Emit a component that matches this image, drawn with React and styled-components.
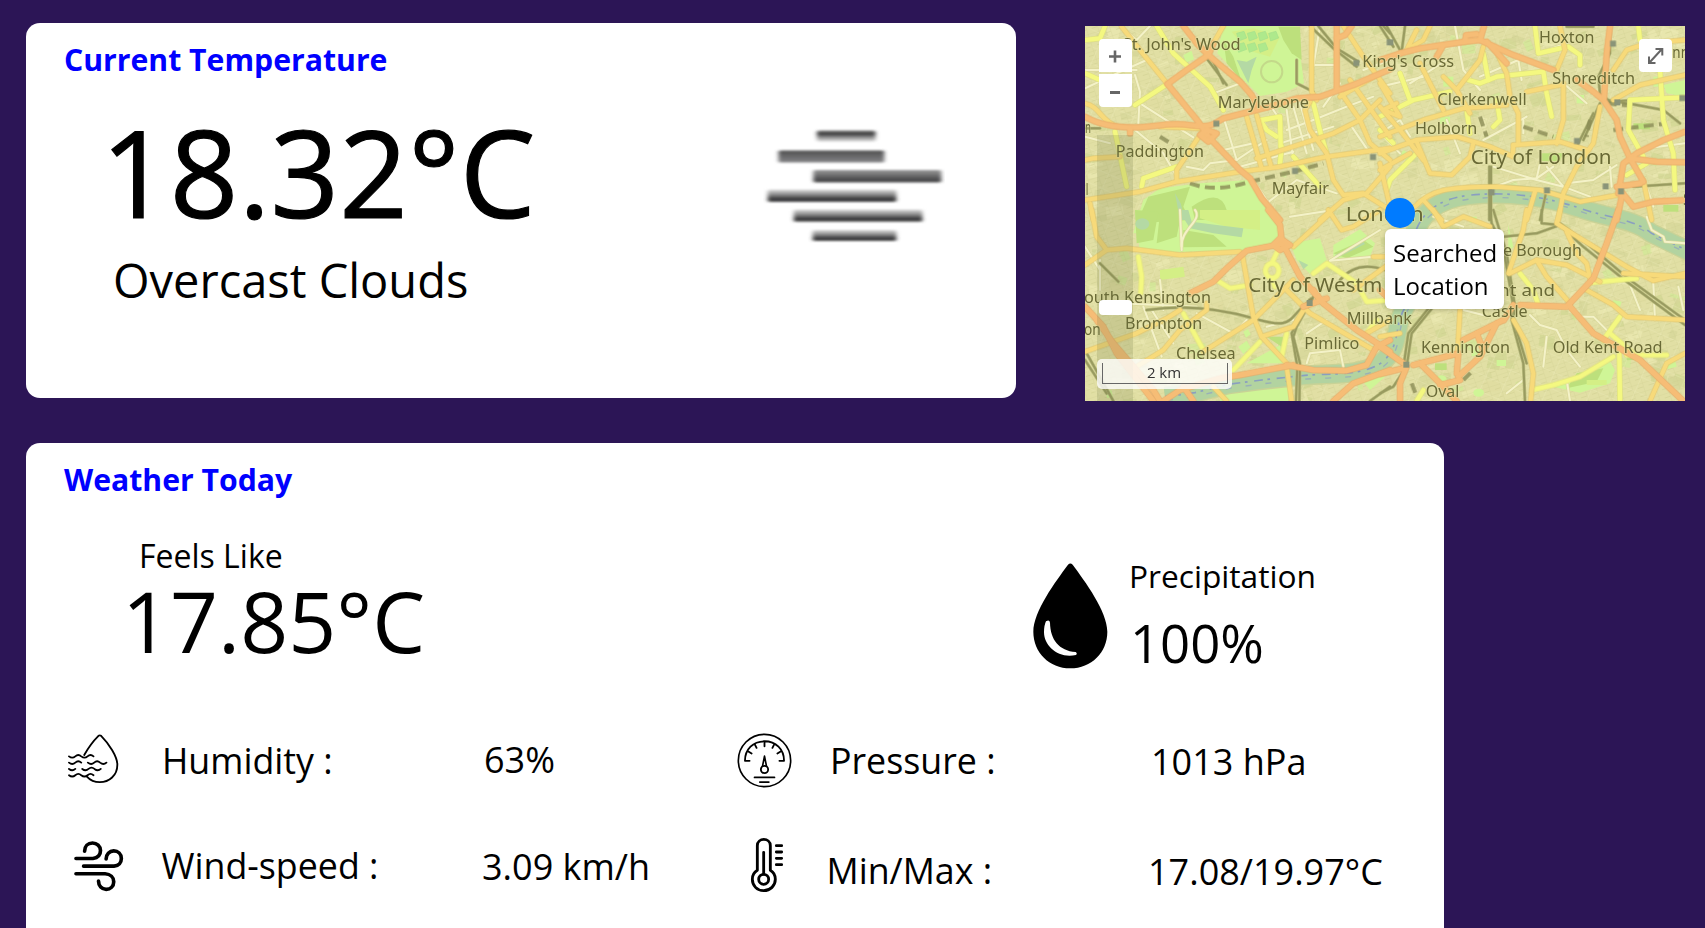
import React from "react";
import styled, { createGlobalStyle } from "styled-components";

const GlobalStyle = createGlobalStyle`
  *, *::before, *::after { box-sizing: border-box; }
  html, body { margin: 0; background: #2c1556; }
  body {
    height: 928px;
    overflow: hidden;
    font-family: "Open Sans", "Noto Sans", sans-serif;
    color: #000;
  }
`;

const Page = styled.main`
  display: flex;
  flex-direction: column;
  gap: 42px;
  height: 928px;
  padding: 23px 20px 0 26px;
  overflow: hidden;
`;

const TopRow = styled.div`
  display: flex;
  align-items: flex-start;
  gap: 69px;
  height: 378px;
`;

const Card = styled.section`
  flex: none;
  width: ${(p) => p.$width}px;
  height: ${(p) => p.$height}px;
  padding: 21px 0 0 38px;
  background: #fff;
  border-radius: 14px;
`;

const CardTitle = styled.h2`
  margin: 0;
  font-size: 30.2px;
  line-height: 31px;
  font-weight: 700;
  color: #0000ff;
`;

const CurrentBody = styled.div`
  display: flex;
  justify-content: space-between;
  align-items: flex-start;
  padding: 37px 71px 0 37px;
`;

const CurrentTemp = styled.div`
  font-size: 120px;
  line-height: 120px;
  letter-spacing: 0.25px;
  -webkit-text-stroke: 1.2px #000;
`;

const Condition = styled.div`
  margin: 24px 0 0 12px;
  font-size: 47px;
  line-height: 48px;
`;

const WeatherIcon = styled.svg`
  width: 182px;
  height: 116px;
  margin-top: 15px;
`;

const Hero = styled.div`
  display: flex;
  justify-content: space-between;
  padding: 44px 128px 0 58px;
  height: 226px;
`;

const FeelsLabel = styled.div`
  padding-left: 17px;
  margin-top: 1px;
  font-size: 32px;
  line-height: 32px;
`;

const FeelsValue = styled.div`
  margin-top: 7px;
  font-size: 84px;
  line-height: 84px;
`;

const Precipitation = styled.div`
  display: flex;
  align-items: flex-start;
  gap: 20px;
  padding-top: 21px;
`;

const DropIcon = styled.svg`
  width: 76px;
  height: 106px;
  margin-top: 3px;
`;

const PrecipLabel = styled.div`
  font-size: 31.7px;
  line-height: 32px;
`;

const PrecipValue = styled.div`
  margin: 24px 0 0 1px;
  font-size: 52.7px;
  line-height: 53px;
`;

const Metrics = styled.div`
  display: grid;
  grid-template-columns: 667px 1fr;
  grid-template-rows: 105px 100px;
  padding-top: 21px;
`;

const Metric = styled.div`
  display: grid;
  grid-template-columns: 98px 322px 1fr;
  align-items: start;
  font-size: 36px;
  line-height: 36px;
`;

const MetricText = styled.span`
  margin: ${(p) => p.$drop || 0}px 0 0 ${(p) => p.$shift || 0}px;
  font-size: ${(p) => (p.$label ? 35.75 : 36)}px;
  white-space: nowrap;
`;

const MetricIcon = styled.svg`
  width: ${(p) => p.$w}px;
  height: ${(p) => p.$h}px;
  margin: ${(p) => p.$top}px 0 0 ${(p) => p.$left}px;
  fill: none;
  stroke: #000;
  stroke-linecap: round;
  stroke-linejoin: round;
`;

const MapFrame = styled.section`
  position: relative;
  flex: none;
  width: 600px;
  height: 375px;
  margin-top: 3px;
  overflow: hidden;
  background: #dedd9f;
`;

const MapCanvas = styled.svg`
  display: block;
  width: 600px;
  height: 375px;
`;

const MapButton = styled.button`
  position: absolute;
  left: ${(p) => p.$x}px;
  top: ${(p) => p.$y}px;
  width: 33px;
  height: 33px;
  padding: 0;
  border: 0;
  background: #fff;
  border-radius: ${(p) => p.$radius || "4px"};
  svg { display: block; width: 33px; height: 33px; }
`;

const SliderTrack = styled.div`
  position: absolute;
  left: 12px;
  top: 109px;
  width: 36px;
  height: 266px;
  background: rgba(110, 120, 70, 0.2);
`;

const SliderThumb = styled.div`
  position: absolute;
  left: 14px;
  top: 274px;
  width: 33px;
  height: 15px;
  border-radius: 4px;
  background: #fff;
`;

const ScaleBar = styled.div`
  position: absolute;
  left: 12px;
  top: 333px;
  width: 135px;
  height: 30px;
  padding: 4px 4px 5px 5px;
  border-radius: 5px;
  background: rgba(255, 255, 255, 0.8);
`;

const ScaleInner = styled.div`
  height: 21px;
  border: 1px solid #666;
  border-top: 0;
  padding-right: 2px;
  color: #333;
  font-size: 15px;
  line-height: 19px;
  text-align: center;
`;

const Marker = styled.div`
  position: absolute;
  left: 300px;
  top: 172px;
  width: 30px;
  height: 30px;
  border-radius: 50%;
  background: #007bff;
`;

const Popup = styled.div`
  position: absolute;
  left: 300px;
  top: 203px;
  width: 119px;
  height: 80px;
  padding: 7px 0 0 8px;
  border-radius: 6px;
  background: #fff;
  box-shadow: 0 1px 4px rgba(0, 0, 0, 0.2);
  font-size: 24px;
  line-height: 33px;
`;

/* Map data: four tiles, each with its own origin in thirds of a pixel. */
const TILES = [
  {
    at: [-15, -18],
    park: [
      "M430,18 L650,18 L672,190 L620,215 L540,228 L450,140 L412,100Z",
      "M190,540 L240,505 L360,490 L505,480 L560,560 L610,640 L160,640Z",
      "M310,105 L335,92 L342,118 L318,128Z",
    ],
    wood: [
      "M595,20 L660,20 L665,120 L635,100 L610,60Z",
      "M205,530 L330,500 L310,560 L330,600 L170,610Z",
      "M335,560 Q420,500 440,570 L400,600 L345,600Z",
      "M430,60 L460,110 L480,170 L500,200 L440,130Z",
    ],
    pale: ["M455,35 L520,25 L600,50 L570,110 L500,90Z"],
    water: ["M470,120 L500,125 L530,110 L515,150 L505,190 L490,160Z", "M285,520 L302,550 L315,600 L300,600Z"],
    white: [
      "M15,150 H170", "M15,205 L110,160 L200,120", "M180,250 L340,352", "M165,165 L180,215 L175,310",
      "M640,260 L680,400", "M620,270 L640,420", "M660,250 L700,390", "M430,290 L470,420",
      "M320,440 L370,450 L390,430 L470,420 L560,360", "M620,330 L700,300 L800,260 L880,230", "M600,370 L760,320",
      "M700,135 H770", "M400,220 L480,190", "M165,330 L250,400 L290,470", "M560,240 L600,300", "M15,350 L90,370",
      "M430,390 L520,370", "M480,440 L640,395", "M815,320 L870,400", "M700,140 L720,18", "M400,215 L415,250", "M520,480 L560,540 L600,600",
      "M730,260 L780,190", "M560,550 L650,480 L770,520", "M850,150 L930,120", "M120,18 L170,60 L210,18",
    ],
    yellow: [
      "M230,18 L280,100 L390,200 L430,270", "M165,255 L262,192", "M15,160 L60,180", "M545,300 L600,290 L602,380",
      "M605,380 L600,430", "M700,250 L722,340 L740,400", "M185,500 L190,475 L290,440", "M105,335 L140,500", "M15,60 L60,55 L75,18",
      "M640,410 L720,500", "M540,300 L560,330 L590,350",
    ],
    amber: [
      "M125,20 L180,90 L262,192", "M15,250 C60,260 60,300 110,320", "M15,540 L180,515 L290,485 L480,455 L600,440 L740,410 L930,385",
      "M500,290 L545,445", "M530,285 L572,435", "M530,415 L700,360 L760,340 L840,300 L900,240", "M695,18 L695,215 L710,240",
      "M690,245 L675,270 L690,330 L740,400 L760,480 L790,525 L850,520 L930,570", "M770,200 L840,300 L870,370 L930,420",
      "M810,180 L930,350", "M240,320 L360,325", "M370,330 L290,450 L290,480", "M790,18 L850,110 L930,220", "M400,70 L430,18",
      "M15,420 L40,415 L120,410", "M30,550 L40,600", "M720,600 L790,540 L860,520 L930,440", "M780,230 L830,200 L900,160",
    ],
    orange: [
      "M15,290 C50,310 90,322 160,322 S260,305 330,315 S400,310 430,295 L560,262", "M560,262 L650,235 L720,230 L820,195 L930,148",
      "M310,18 L350,70 L385,105 L420,135 L480,185 L515,225 L530,255", "M385,105 L320,150 L262,192 L355,305 L385,350 L480,450 L510,475 L545,535 L600,600",
      "M770,18 V205", "M385,105 L400,70", "M770,55 L795,45 L815,18", "M360,345 L380,330 L410,340 L385,365Z", "M150,325 L150,340",
    ],
    rail: ["M380,115 L440,195", "M395,115 L430,190", "M690,18 L760,85 L830,140", "M715,18 L770,85 L835,125", "M930,40 L910,18", "M650,120 L650,190 L700,215", "M20,325 L60,325"],
    dash: ["M330,490 C400,515 460,500 510,485 L640,455", "M240,350 L280,375", "M640,455 L730,430"],
    station: [[636, 444], [820, 120], [870, 402], [922, 58], [400, 302]],
  },
  {
    at: [885, -18],
    park: ["M850,195 L915,180 L915,230 L860,220Z", "M820,170 h25 v30 h-25Z", "M180,290 h30 v22 h-30Z", "M190,170 h30 v30 h-30Z", "M590,225 h22 v25 h-22Z", "M70,390 l25,15 l-12,18 l-25,-15Z"],
    wood: ["M480,400 h70 l-10,24 h-60Z", "M850,555 h45 v20 h-45Z", "M760,310 h50 v18 h-50Z"],
    pale: [],
    water: [],
    white: [
      "M225,18 L250,150 L300,210", "M310,360 L440,290", "M340,440 L470,480 L550,500", "M560,490 L640,480 L710,435",
      "M345,500 L400,480 L470,475 L520,440", "M690,440 L695,500", "M500,440 L550,500 L630,530", "M0,200 L130,170", "M90,190 L200,120",
      "M300,170 L415,120 L425,180", "M0,340 L60,400", "M15,330 L60,300 L90,350", "M470,100 L560,70", "M200,300 L240,400", "M800,385 L915,370",
      "M800,500 L820,560", "M470,475 L480,430", "M430,300 L430,340", "M550,190 L620,250",
    ],
    yellow: [
      "M465,18 L475,100 L565,80 L600,105 L600,135", "M265,180 L300,190 L350,170 L490,155 L500,220 L515,290", "M0,290 L100,240 L210,215",
      "M60,160 L90,240", "M775,18 L780,60", "M840,150 L850,300 L880,400 L885,510", "M750,240 L745,330 L790,410", "M750,240 L915,232",
      "M310,100 L325,180", "M350,240 L360,300 L340,320", "M20,510 L30,480 L110,400", "M260,270 L270,340", "M0,330 L40,370", "M740,465 L800,430",
    ],
    amber: [
      "M120,130 L150,190 L190,270", "M190,170 L230,210 L300,120 L310,80", "M345,85 L380,160 L390,230 L415,280 L415,370", "M540,18 L555,90 L530,150",
      "M550,190 L550,300 L530,370", "M440,215 L540,195", "M0,350 L130,300 L250,265 L380,255", "M0,400 L110,360 L230,350 L330,380 L400,410",
      "M400,375 L540,365 L620,390", "M400,375 L398,410", "M660,260 L640,370 L590,440 L550,520 L535,600", "M700,240 L780,195 L915,165",
      "M700,150 L740,90 L800,70 L915,60", "M105,560 C150,510 200,500 350,500 L480,510 L600,545 L715,525", "M110,365 L150,460 L215,465 L270,410 L280,370",
      "M465,515 L440,600", "M790,480 L815,600", "M0,260 L60,330 L130,420", "M0,190 L60,290 L10,270 L50,250", "M110,30 L80,90 L130,60 L150,18", "M0,450 L90,400",
      "M0,430 L30,560", "M130,540 L185,600", "M230,210 L270,280",
    ],
    orange: [
      "M60,100 L120,85 L255,65 L300,60 L400,105 L520,150", "M255,65 L258,45 L290,42", "M300,60 L312,18", "M590,180 L640,215 L670,240 L710,300 L720,350 L750,415 L790,485",
      "M690,18 L680,100 L672,235", "M715,520 L730,430 L770,400 L850,360 L915,335", "M750,415 L830,425 L915,427", "M720,510 L760,560 L820,545 L915,540",
      "M710,500 L780,490", "M725,530 L710,600", "M0,120 L60,100", "M190,75 L170,110", "M320,65 L380,130",
    ],
    rail: [
      "M333,440 V600", "M328,440 V600", "M480,600 L500,510", "M690,18 L690,100 L655,170 L660,220 L690,245 L915,230", "M680,240 L770,255 L850,270 L900,310",
      "M0,18 L40,80", "M20,18 L60,90", "M75,18 L65,95", "M760,500 L915,490", "M660,250 L610,360", "M640,280 L590,380", "M560,20 L640,20",
    ],
    dash: ["M430,320 L520,350", "M680,250 L760,258", "M630,300 L620,350", "M700,330 L860,310", "M300,290 L320,350"],
    station: [[20, 58], [690, 62], [703, 238], [582, 354], [668, 490], [714, 505], [492, 502], [326, 508], [898, 225]],
  },
  {
    at: [-15, 552],
    park: [
      "M165,0 L575,0 L600,95 L480,122 L180,128Z", "M630,100 L720,85 L740,150 L690,192 L650,150Z", "M760,105 L840,58 L885,100 L870,140 L760,150Z",
      "M430,525 L560,525 L625,510 L625,573 L420,573Z", "M500,460 L600,405 L620,460Z", "M475,410 l25,-18 l12,20 l-22,20Z", "M490,365 l14,-8 l8,16 l-14,10Z",
      "M78,545 l16,-5 l5,22 l-18,2Z", "M845,510 L905,470 L915,500 L870,540Z",
    ],
    wood: ["M165,0 L235,5 L220,90 L170,100Z", "M240,10 L300,30 L290,80 L230,100Z", "M310,60 L400,75 L440,110 L310,112Z", "M760,130 L850,90 L880,110 L800,145Z", "M560,380 L610,380 L605,410Z"],
    pale: ["M360,0 L540,0 L540,60 L440,50 L360,25Z", "M240,180 L310,170 L315,200 L240,210Z"],
    water: ["M295,0 L325,0 L335,35 L410,45 L490,55 L485,82 L400,70 L330,55Z", "M166,42 a21,17 0 1,0 42,0 a21,17 0 1,0 -42,0", "M765,135 L850,95 L855,102 L770,145Z", "M655,150 L685,165 L670,178Z"],
    white: [
      "M750,152 L900,60", "M750,152 L880,140", "M240,210 L250,300", "M190,290 L245,440", "M350,310 L460,370 L500,330", "M680,460 L690,430 L780,420 L790,470",
      "M215,300 L280,400", "M630,20 L760,0", "M120,280 L350,290", "M15,110 L60,180", "M560,350 L640,330", "M300,0 L305,120", "M345,0 C370,30 300,60 305,110",
      "M740,330 L680,370", "M60,150 L60,240",
    ],
    yellow: [
      "M175,140 L185,200 L182,250", "M410,210 L450,235 L510,225", "M592,125 L575,160", "M310,310 L370,420", "M460,480 L540,395", "M700,190 L740,160 L830,220 L860,275 L930,270",
      "M620,370 L605,440", "M577,160 a20,22 0 1,1 -1,0", "M575,205 L585,230", "M890,330 L860,370",
    ],
    amber: [
      "M35,0 L50,80 L80,120 L15,165", "M80,120 L140,115 L300,135 L480,125", "M488,140 L520,320 L545,380 L620,460", "M15,425 L170,370 L260,325 L300,300",
      "M370,425 L520,330 L600,250 L640,210", "M170,470 L250,420 L300,360 L380,300 L380,280", "M640,110 L750,10", "M620,240 L690,310 L880,420", "M545,380 L640,350 L680,285",
      "M620,470 L635,573", "M745,0 L785,60 L820,50 L900,0", "M820,240 L930,160", "M880,140 L930,140", "M400,530 L440,573", "M860,370 L930,330",
    ],
    orange: [
      "M565,0 L600,45 L605,95 L660,200 L730,280 L830,360 L930,425", "M615,100 L500,122 L440,175 L400,215 L330,250", "M640,465 L480,495 L420,505 L300,540 L250,573",
      "M620,465 L700,480 L800,482 L860,465 L890,410 L930,390", "M15,290 L70,350 L110,430 L220,573", "M50,330 L100,400 L220,540 L240,573", "M310,530 L340,573",
      "M760,573 L820,520 L930,480", "M600,85 L630,105 L600,120 L580,105Z", "M700,240 L730,280", "M670,290 L740,265",
    ],
    rail: [
      "M700,260 L650,350 L640,380 L660,460 L658,573", "M688,270 L635,370 L652,470 L648,573", "M200,300 C300,285 400,290 520,325 S620,330 680,280",
      "M60,160 L115,215", "M20,430 L100,573", "M15,450 L80,550", "M780,210 Q830,150 915,180", "M930,530 L870,573",
    ],
    dash: ["M680,290 L705,250"],
    station: [[680, 270]],
  },
  {
    at: [885, 552],
    park: [
      "M520,530 L600,490 L690,455 L705,480 L690,520 L600,548Z", "M385,45 L400,110 L385,130Z", "M350,450 h28 v18 h-28Z", "M700,270 l25,5 l-5,15 l-22,-5Z",
      "M275,420 h25 v18 h-25Z", "M168,508 a16,12 0 1,0 32,0 a16,12 0 1,0 -32,0", "M280,548 a16,12 0 1,0 32,0 a16,12 0 1,0 -32,0", "M855,460 l30,-10 l5,20 l-30,8Z", "M270,20 l20,0 l0,16 l-22,2Z",
    ],
    wood: ["M590,490 L670,475 L650,515 L560,535Z", "M165,460 h35 v20 h-35Z", "M740,430 h30 v20 h-30Z"],
    pale: ["M620,510 h60 v15 h-60Z"],
    water: [],
    white: [
      "M800,20 L815,60 L850,80 L855,95 L915,100", "M600,320 L640,320 L690,370", "M820,220 L825,330", "M450,315 L480,345 L530,360 L560,420 L600,470",
      "M560,510 L570,573", "M895,230 L910,300", "M380,550 L430,510", "M160,20 L250,50", "M0,270 L40,240", "M500,380 L490,470", "M740,200 L780,300", "M250,300 L330,320",
    ],
    yellow: ["M455,540 L520,525 L600,500 L700,440", "M670,390 L720,320", "M718,430 L720,573", "M630,218 L770,205", "M420,190 L460,240 L475,285", "M690,370 L760,430", "M740,435 L860,435", "M110,573 L130,540", "M80,170 L60,230"],
    amber: [
      "M390,190 L470,150 L560,165 L660,215", "M470,150 L500,200 L570,280", "M590,130 L620,160 L632,215", "M620,240 L700,285 L740,320 L915,330",
      "M400,330 L440,400 L460,490 L452,573", "M240,300 L232,440", "M600,85 L740,170 L820,212 L915,190", "M915,430 L860,460 L810,573", "M160,0 L190,50 L250,20 L330,50",
      "M440,0 L430,60 L385,190", "M540,0 L530,40 L600,85", "M560,65 L590,130", "M0,380 L60,370", "M730,190 L915,200",
    ],
    orange: [
      "M420,285 L560,290 L640,205 L680,100 L715,0", "M570,290 L640,370 L780,450 L910,573", "M250,390 L370,330", "M350,340 L300,440 L235,500", "M100,465 L235,430 L230,490",
      "M0,410 L70,460", "M0,492 L70,475", "M60,573 L60,520 L80,470", "M120,460 L180,520 L230,573", "M290,370 L310,420", "M180,525 L240,510", "M372,330 L400,285", "M0,240 L30,270",
    ],
    rail: [
      "M330,0 L335,40 L370,110 L400,290 L395,330 L430,460 L435,573", "M340,0 L380,130 L405,290 L400,330 L440,460", "M485,0 L485,40 L540,45 L610,110 L740,215 L915,345",
      "M540,40 L620,100 L750,210 L915,330", "M370,80 L470,70 L540,45", "M160,290 L95,370 L80,470 L40,530 L0,550", "M150,290 L85,370 L72,460",
    ],
    dash: ["M95,520 L110,560", "M250,510 L280,480"],
    station: [[70, 455]],
  },
];

const LABELS = [
  [113, 72, 354, 46, "St. John's Wood"], [398, 246, 274, 46, "Marylebone"], [92, 394, 265, 46, "Paddington"], [560, 504, 172, 46, "Mayfair"],
  [782, 584, 234, 60, "London"], [832, 124, 275, 46, "King's Cross"], [0, 322, 18, 46, "n"], [2, 506, 8, 46, "l"],
  [1057, 238, 268, 46, "Clerkenwell"], [1362, 52, 166, 46, "Hoxton"], [1402, 175, 248, 46, "Shoreditch"], [990, 325, 187, 46, "Holborn"],
  [1157, 414, 423, 60, "City of London"], [1762, 96, 50, 46, "nn"], [1794, 538, 26, 46, "S"],
  [490, 799, 402, 60, "City of Westm"], [-3, 832, 381, 46, "outh Kensington"], [120, 910, 232, 46, "Brompton"], [-3, 926, 50, 46, "on"],
  [273, 1000, 179, 46, "Chelsea"], [658, 968, 165, 46, "Pimlico"], [785, 895, 196, 46, "Millbank"],
  [1254, 689, 237, 46, "e Borough"], [1240, 811, 170, 46, "nt and"], [1190, 874, 138, 46, "Castle"], [1008, 981, 267, 46, "Kennington"],
  [1403, 982, 330, 46, "Old Kent Road"], [1022, 1114, 101, 46, "Oval"],
];

const tileShift = (t) => `translate(${t.at[0]} ${t.at[1]})`;

const makeBlocks = () => {
  let seed = 71;
  const rnd = () => {
    seed = (seed * 16807) % 2147483647;
    return seed / 2147483647;
  };
  return Array.from({ length: 620 }, () => ({
    x: rnd() * 1800,
    y: rnd() * 1125,
    w: 14 + rnd() * 40,
    h: 10 + rnd() * 26,
    r: -30 + rnd() * 50,
    c: ["#d6d698", "#ebe8b0", "#d0d592", "#dfdba0", "#d0ea96"][Math.floor(rnd() * 4.4)],
  }));
};
const BLOCKS = makeBlocks();

const RoadLayer = ({ kind, color, casing, width }) => (
  <g fill="none" strokeLinejoin="round" strokeLinecap="round">
    {casing && TILES.map((t, i) => (
      <g key={`c${i}`} transform={tileShift(t)} stroke={casing} strokeWidth={width + 4}>
        {t[kind].map((d, j) => <path key={j} d={d} />)}
      </g>
    ))}
    {TILES.map((t, i) => (
      <g key={i} transform={tileShift(t)} stroke={color} strokeWidth={width}>
        {t[kind].map((d, j) => <path key={j} d={d} />)}
      </g>
    ))}
  </g>
);

const AreaLayer = ({ kind, color }) =>
  TILES.map((t, i) => (
    <g key={i} transform={tileShift(t)} fill={color}>
      {t[kind].map((d, j) => <path key={j} d={d} />)}
    </g>
  ));

const RIVER =
  "M240,1112 L330,1100 L430,1075 L530,1062 L660,1048 C740,1042 830,1050 890,1010 C950,960 925,900 960,845 C1000,780 1000,700 985,640 C1000,570 1050,520 1150,508 C1270,495 1380,512 1480,545 C1560,575 1640,575 1700,622 L1820,680";

const CityMap = () => (
  <MapCanvas viewBox="0 0 1800 1125">
    <defs>
      <pattern id="lanesA" width="34" height="26" patternUnits="userSpaceOnUse" patternTransform="rotate(-18)">
        <path d="M0,0 H34 M0,0 V26 M17,13 H34" stroke="#cbcb8c" strokeWidth="2" fill="none" />
      </pattern>
      <pattern id="lanesB" width="61" height="47" patternUnits="userSpaceOnUse" patternTransform="rotate(24)">
        <path d="M0,0 H61 M0,0 V47" stroke="#f2efc2" strokeWidth="3" fill="none" />
      </pattern>
    </defs>
    <rect width="1800" height="1125" fill="#e1dfa4" />
    {BLOCKS.map((b, i) => (
      <rect key={i} x={b.x} y={b.y} width={b.w} height={b.h} fill={b.c} opacity="0.7" transform={`rotate(${b.r} ${b.x} ${b.y})`} />
    ))}
    <rect width="1800" height="1125" fill="url(#lanesA)" opacity="0.65" />
    <rect width="1800" height="1125" fill="url(#lanesB)" opacity="0.45" />
    <AreaLayer kind="park" color="#cff596" />
    <AreaLayer kind="wood" color="#bde07c" />
    <AreaLayer kind="pale" color="#d4ef86" />
    <g fill="#aee98c" stroke="#a4e08c" strokeWidth="2">
      {[0, 1, 2, 3, 4, 5, 6].map((n) => (
        <path key={n} d={`M${455 + (n % 4) * 32},${22 + Math.floor(n / 4) * 34} l22,-6 l8,20 l-24,9Z`} />
      ))}
    </g>
    <circle cx="560" cy="137" r="32" fill="none" stroke="#c3d98a" strokeWidth="6" />
    <AreaLayer kind="water" color="#b4d9a4" />
    <path d={RIVER} fill="none" stroke="#c8d296" strokeWidth="60" />
    <path d={RIVER} fill="none" stroke="#b2d3a0" strokeWidth="52" />
    <path d={RIVER} fill="none" stroke="#8a9fc0" strokeWidth="5" strokeDasharray="26 14 8 20" />
    <path d={RIVER} fill="none" stroke="#99b0b8" strokeWidth="4" strokeDasharray="18 42" transform="translate(6 11)" />
    <RoadLayer kind="white" color="#f4f2c8" width={6} casing="#dad89a" />
    <RoadLayer kind="rail" color="#999b60" width={6} casing="#bcbe80" />
    <g fill="none" stroke="#8a8b56" strokeWidth="12" strokeDasharray="30 16" opacity="0.8">
      {TILES.map((t, i) => (
        <g key={i} transform={tileShift(t)}>{t.dash.map((d, j) => <path key={j} d={d} />)}</g>
      ))}
    </g>
    <RoadLayer kind="yellow" color="#f4f880" width={13} casing="#dfe080" />
    <RoadLayer kind="amber" color="#f7da7a" width={12} casing="#e4c870" />
    <RoadLayer kind="orange" color="#f6bd76" width={15} casing="#e9ad6a" />
    {TILES.map((t, i) => (
      <g key={i} transform={tileShift(t)} fill="#8a9478">
        {t.station.map(([x, y]) => <rect key={`${x}-${y}`} x={x} y={y} width="18" height="18" />)}
      </g>
    ))}
    <g fontFamily="'Noto Sans', 'Open Sans', sans-serif" fill="#696936" stroke="#e4e3a6" strokeWidth="5" strokeOpacity="0.6" strokeLinejoin="round" paintOrder="stroke">
      {LABELS.map(([x, y, length, size, text]) => (
        <text key={`${text}${x}`} x={x} y={y} fontSize={size} textLength={length} lengthAdjust="spacingAndGlyphs">{text}</text>
      ))}
    </g>
  </MapCanvas>
);

const FOG_BARS = [
  [287, 89, 180, 34, "fogTop"], [169, 150, 325, 37, "fogFlat"], [276, 210, 393, 38, "fogLow"],
  [136, 270, 395, 38, "fogDeep"], [216, 331, 395, 38, "fogDeep"], [274, 394, 257, 34, "fogDeep"],
];

const FogIcon = () => (
  <WeatherIcon viewBox="128 78 546 356">
    <defs>
      <linearGradient id="fogTop" x2="0" y2="1"><stop offset="0" stopColor="#777" /><stop offset=".3" stopColor="#3a3a3c" /><stop offset=".6" stopColor="#8a8a8a" /><stop offset="1" stopColor="#e4e4e4" /></linearGradient>
      <linearGradient id="fogFlat" x2="0" y2="1"><stop offset="0" stopColor="#4d4d4f" /><stop offset="1" stopColor="#858587" /></linearGradient>
      <linearGradient id="fogLow" x2="0" y2="1"><stop offset="0" stopColor="#999" /><stop offset=".8" stopColor="#48484a" /><stop offset="1" stopColor="#555" /></linearGradient>
      <linearGradient id="fogDeep" x2="0" y2="1"><stop offset="0" stopColor="#ddd" /><stop offset=".45" stopColor="#808080" /><stop offset=".75" stopColor="#363638" /><stop offset="1" stopColor="#555" /></linearGradient>
      <filter id="soft" x="-10%" y="-10%" width="120%" height="120%"><feGaussianBlur stdDeviation="6 4" /></filter>
    </defs>
    <g filter="url(#soft)">
      {FOG_BARS.map(([x, y, w, h, fill]) => <rect key={y} x={x} y={y} width={w} height={h} rx="5" fill={`url(#${fill})`} />)}
    </g>
  </WeatherIcon>
);

const HumidityIcon = () => (
  <MetricIcon viewBox="52 70 154 150" $w={51} $h={50} $top={-8} $left={4} strokeWidth="5.5">
    <path d="M101,133 C112,113 130,89 144,75 Q148,72 152,75 C176,99 201,138 201,162 C201,195 176,215 148,215 C132,215 119,209 109,198" />
    {[[55, 137, 4], [55, 156, 2], [112, 156, 3], [55, 175, 1], [95, 175, 3], [55, 194, 4]].map(([x, y, n]) => (
      <path key={`${x}-${y}`} d={`M${x},${y} ${Array.from({ length: n }, (_, i) => (i % 2 ? "q9,-8 18,0" : "q10,8 19,0")).join(" ")}`} />
    ))}
  </MetricIcon>
);

const PressureIcon = () => (
  <MetricIcon viewBox="52 66 166 166" $w={55} $h={55} $top={-9} $left={6} strokeWidth="5.5">
    <circle cx="135" cy="149" r="79" strokeWidth="5" />
    <path d="M90,150 H76 C76,115 101,91 135,91 S194,115 194,150 H180 M135,92 V106 M105,99 L111,111 M165,99 L159,111 M84,120 L96,128 M186,120 L174,128" />
    <path d="M135,136 L129,166 M135,136 L141,166" strokeWidth="5" />
    <circle cx="135" cy="176" r="11" />
    <path d="M105,200 H165 M121,214 H148" />
  </MetricIcon>
);

const WindIcon = () => (
  <MetricIcon viewBox="68 389 154 157" $w={51} $h={52} $top={-7} $left={9} strokeWidth="11">
    <path d="M77,445 H128 C143,443 151,434 151,421 C151,407 140,398 127,398 C113,398 103,408 103,423" />
    <path d="M100,468 H192 C206,467 214,457 214,445 C214,431 204,422 191,422 C178,422 168,432 168,446" />
    <path d="M77,491 H165 C181,492 191,502 191,515 C191,529 181,538 168,538 C155,538 145,528 145,513" />
  </MetricIcon>
);

const ThermometerIcon = () => (
  <MetricIcon viewBox="90 381 102 168" $w={34} $h={56} $top={-10} $left={19} strokeWidth="8.5">
    <path d="M112,481 V407 C112,382 151,382 151,407 V481 C161,487 166,497 166,508 C166,527 151,542 131,542 S97,527 97,508 C97,497 102,487 112,481Z" />
    <circle cx="131" cy="508" r="15" />
    <path d="M131,427 V492 M169,407 H185 M169,426 H185 M169,445 H185 M169,464 H185" />
  </MetricIcon>
);

export default function App() {
  return (
    <>
      <GlobalStyle />
      <Page>
        <TopRow>
          <Card $width={990} $height={375}>
            <CardTitle>Current Temperature</CardTitle>
            <CurrentBody>
              <div>
                <CurrentTemp>18.32°C</CurrentTemp>
                <Condition>Overcast Clouds</Condition>
              </div>
              <FogIcon />
            </CurrentBody>
          </Card>
          <MapFrame>
            <CityMap />
            <SliderTrack />
            <SliderThumb />
            <MapButton $x={14} $y={13} $radius="4px 4px 0 0" aria-label="Zoom in">
              <svg viewBox="0 0 33 33"><path d="M10,17.5 H22 M16,11.5 V23.5" stroke="#666" strokeWidth="2.6" /></svg>
            </MapButton>
            <MapButton $x={14} $y={48} $radius="0 0 4px 4px" aria-label="Zoom out">
              <svg viewBox="0 0 33 33"><path d="M11,18.5 H21" stroke="#666" strokeWidth="3" /></svg>
            </MapButton>
            <MapButton $x={554} $y={13} aria-label="Full screen">
              <svg viewBox="0 0 33 33"><path d="M10.5,23.5 L22.5,10.5 M16.5,10 H23.3 V16.5 M10,17.5 V24 H16.5" fill="none" stroke="#666" strokeWidth="2" /></svg>
            </MapButton>
            <ScaleBar><ScaleInner>2 km</ScaleInner></ScaleBar>
            <Marker />
            <Popup>Searched<br />Location</Popup>
          </MapFrame>
        </TopRow>
        <Card $width={1418} $height={520}>
          <CardTitle>Weather Today</CardTitle>
          <Hero>
            <div>
              <FeelsLabel>Feels Like</FeelsLabel>
              <FeelsValue>17.85°C</FeelsValue>
            </div>
            <Precipitation>
              <DropIcon viewBox="99 70 228 318">
                <path d="M204,75 Q211,68 218,75 C255,125 322,215 322,276 C322,338 274,386 211,386 S100,338 100,276 C100,215 167,125 204,75Z" />
                <path d="M142,243 Q149,241 150,249 C151,300 177,333 227,337 Q233,341 228,346 C176,358 132,320 132,278 Q132,257 138,245Z" fill="#fff" />
              </DropIcon>
              <div>
                <PrecipLabel>Precipitation</PrecipLabel>
                <PrecipValue>100%</PrecipValue>
              </div>
            </Precipitation>
          </Hero>
          <Metrics>
            <Metric>
              <HumidityIcon />
              <MetricText $label>Humidity :</MetricText>
              <MetricText>63%</MetricText>
            </Metric>
            <Metric>
              <PressureIcon />
              <MetricText $label $shift={1}>Pressure :</MetricText>
              <MetricText $drop={2}>1013 hPa</MetricText>
            </Metric>
            <Metric>
              <WindIcon />
              <MetricText $label $shift={-0.5}>Wind-speed :</MetricText>
              <MetricText $drop={2} $shift={-2}>3.09 km/h</MetricText>
            </Metric>
            <Metric>
              <ThermometerIcon />
              <MetricText $label $drop={5} $shift={-2.5}>Min/Max :</MetricText>
              <MetricText $drop={7} $shift={-3}>17.08/19.97°C</MetricText>
            </Metric>
          </Metrics>
        </Card>
      </Page>
    </>
  );
}
